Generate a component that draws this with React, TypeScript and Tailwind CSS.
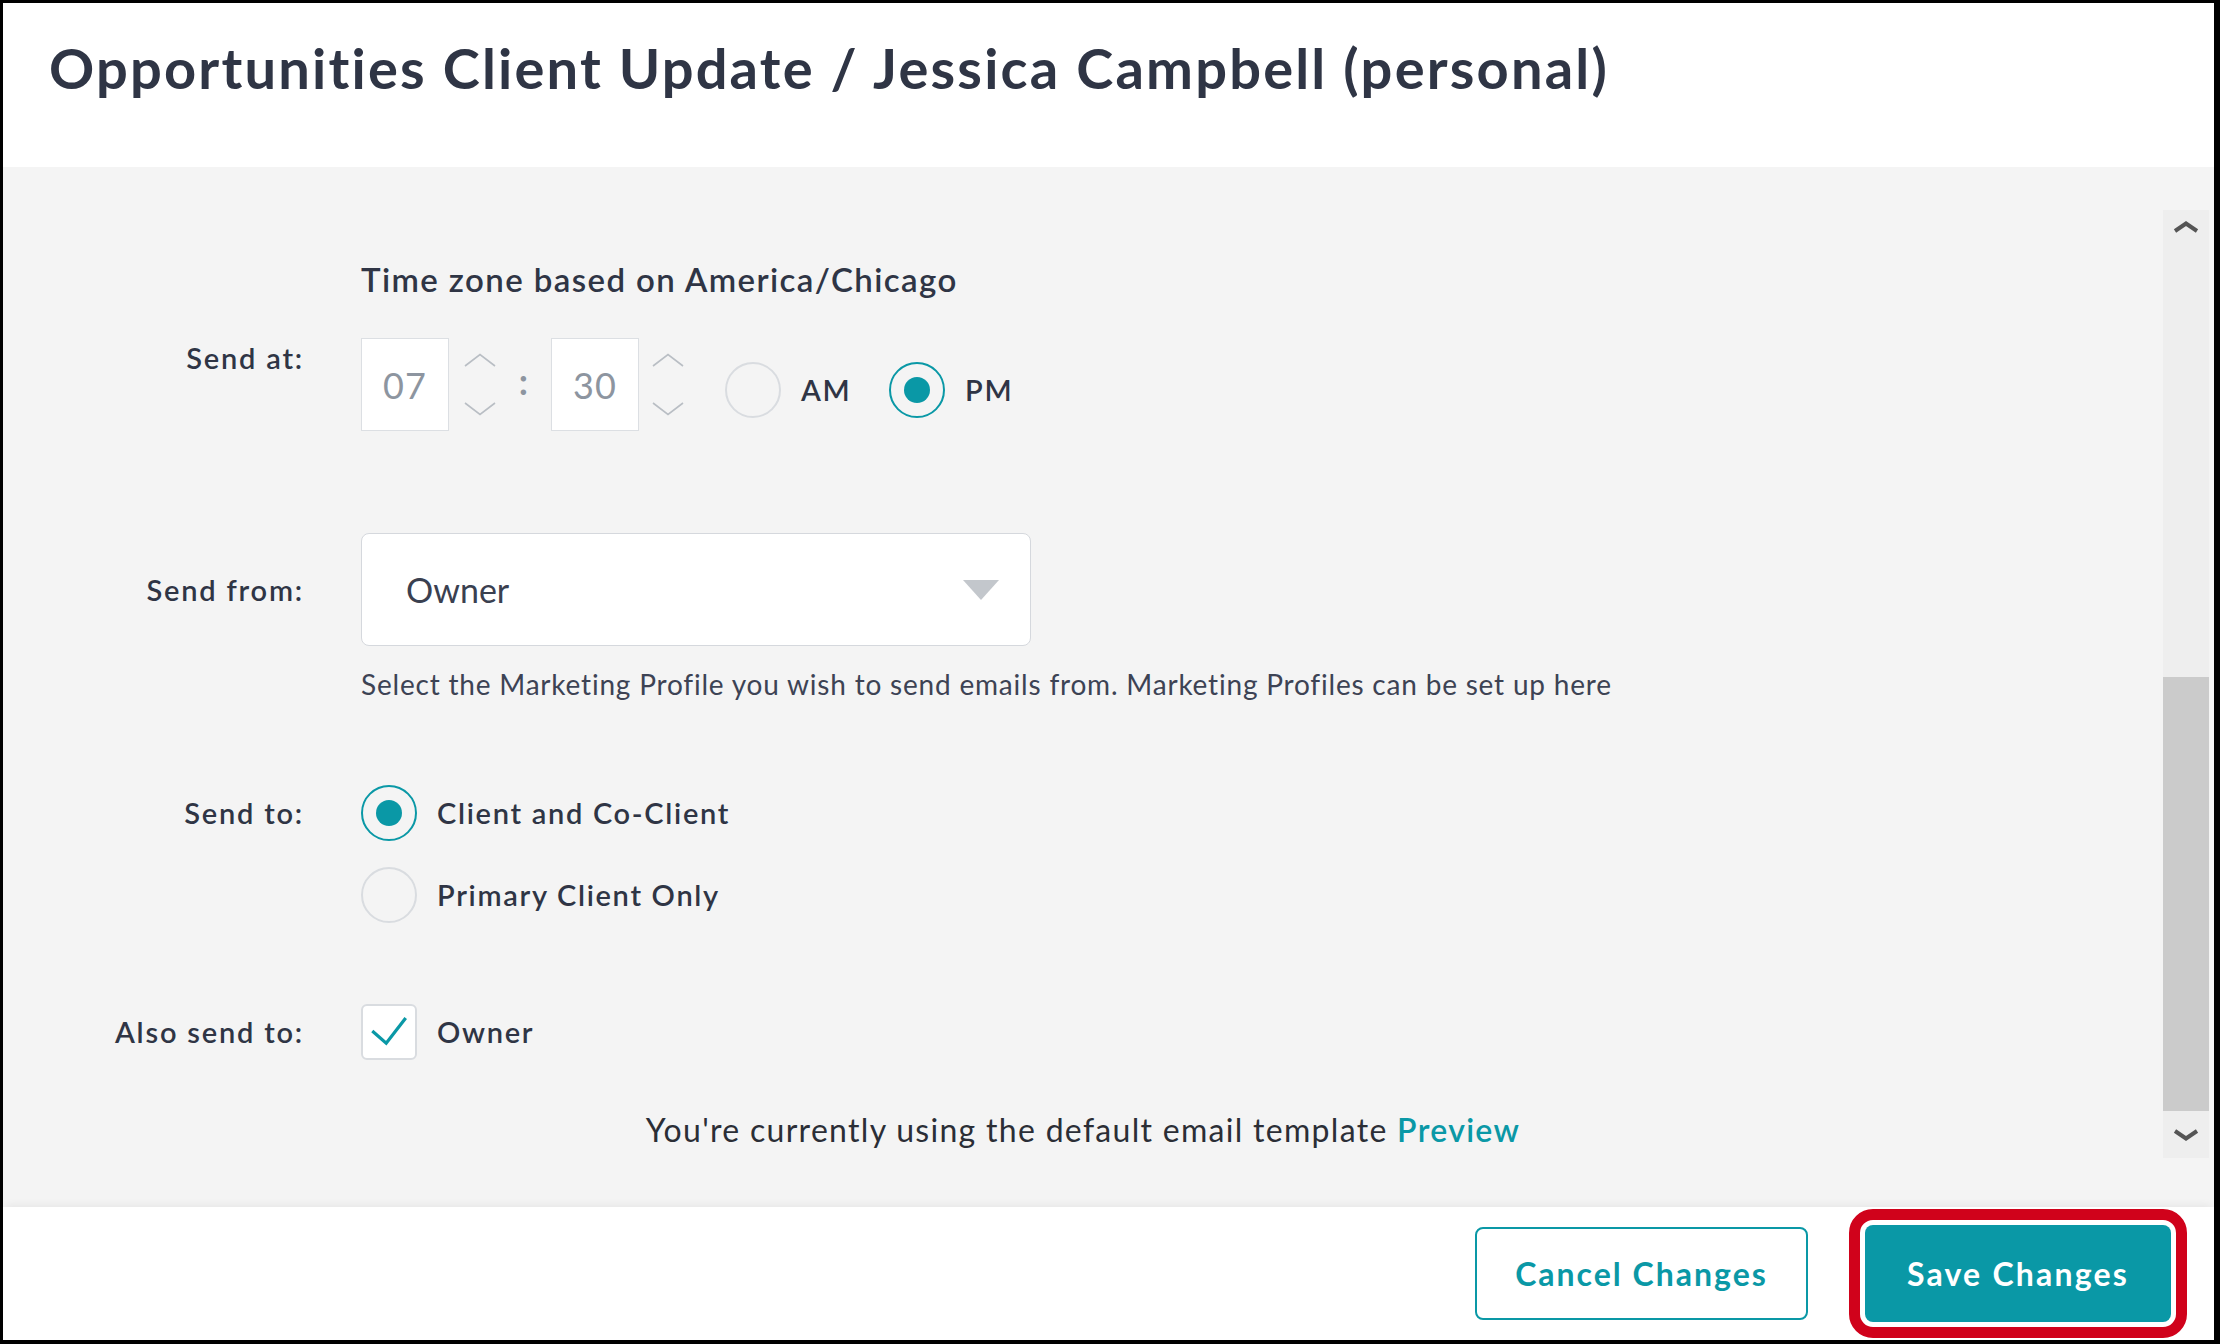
import React from "react";

const TEAL = "#0a98a6";

const Chevron = ({ up }: { up?: boolean }) => (
  <svg width="32" height="14" viewBox="0 0 32 14" fill="none">
    <path
      d={up ? "M1 13 L16 1.5 L31 13" : "M1 1 L16 12.5 L31 1"}
      stroke="#b9bec4"
      strokeWidth="1.6"
    />
  </svg>
);

const Spinner = () => (
  <div className="flex flex-col items-center gap-[35px] w-[32px]">
    <Chevron up />
    <Chevron />
  </div>
);

const TimeBox = ({ value }: { value: string }) => (
  <div className="w-[88px] h-[93px] bg-white border border-[#dcdfe3] flex items-center justify-center text-[36px] tracking-[1px] text-[#8d95a0]">
    {value}
  </div>
);

const Radio = ({ checked }: { checked?: boolean }) => (
  <div
    className={
      checked
        ? "w-[56px] h-[56px] rounded-full border-2 border-[#0a98a6] flex items-center justify-center shrink-0"
        : "w-[56px] h-[56px] rounded-full border-2 border-[#d9dce0] shrink-0"
    }
  >
    {checked && <div className="w-[26px] h-[26px] rounded-full bg-[#0a98a6]" />}
  </div>
);

const Label = ({ children, lh }: { children: React.ReactNode; lh: string }) => (
  <div className={`w-[301px] shrink-0 text-right text-[29px] font-semibold tracking-[1.8px] text-[#2f3545] ${lh}`}>
    {children}
  </div>
);

const OptionText = ({ children }: { children: React.ReactNode }) => (
  <span className="ml-[20px] text-[29px] font-semibold tracking-[1.7px] text-[#2f3545]">{children}</span>
);

export default function App() {
  return (
    <div className="w-[2220px] h-[1344px] border-black border-t-[3px] border-l-[3px] border-r-[6px] border-b-[4px] bg-white flex flex-col font-['Lato',sans-serif]">
      {/* header */}
      <div className="h-[164px] shrink-0 pl-[46px] pt-[33px]">
        <h1 className="text-[56px] leading-[64px] font-bold tracking-[2.2px] text-[#2f3545]">
          Opportunities Client Update / Jessica Campbell (personal)
        </h1>
      </div>

      {/* body */}
      <div className="flex-1 bg-[#f4f4f4] flex">
        <div className="w-[2160px] shrink-0 pt-[92px] flex flex-col">
          {/* time zone */}
          <div className="flex">
            <div className="w-[301px] shrink-0" />
            <div className="ml-[57px] text-[33px] leading-[40px] font-semibold tracking-[1.4px] text-[#2f3545]">
              Time zone based on America/Chicago
            </div>
          </div>

          {/* send at */}
          <div className="flex items-start mt-[39px]">
            <Label lh="leading-[40px]">Send at:</Label>
            <div className="ml-[57px] flex items-center h-[93px]">
              <TimeBox value="07" />
              <div className="ml-[15px]">
                <Spinner />
              </div>
              <div className="w-[55px] text-center text-[36px] font-bold text-[#8d95a0] mb-[8px]">:</div>
              <TimeBox value="30" />
              <div className="ml-[13px]">
                <Spinner />
              </div>
              <div className="ml-[41px] mt-[10px] w-[164px] flex items-center">
                <Radio />
                <OptionText>AM</OptionText>
              </div>
              <div className="mt-[10px] flex items-center">
                <Radio checked />
                <OptionText>PM</OptionText>
              </div>
            </div>
          </div>

          {/* send from */}
          <div className="flex items-center mt-[102px]">
            <Label lh="leading-[40px]">Send from:</Label>
            <div className="ml-[57px] w-[670px] h-[113px] bg-white border border-[#d5d8dd] rounded-[8px] flex items-center justify-between pl-[44px] pr-[31px]">
              <span className="text-[34px] text-[#3a4050]">Owner</span>
              <svg width="36" height="20" viewBox="0 0 36 20">
                <path d="M0 0 H36 L18 20 Z" fill="#c3c7cc" />
              </svg>
            </div>
          </div>
          <div className="flex">
            <div className="w-[301px] shrink-0" />
            <div className="ml-[57px] mt-[20px] text-[28px] leading-[36px] tracking-[0.8px] text-[#3d4354]">
              Select the Marketing Profile you wish to send emails from. Marketing Profiles can be set up here
            </div>
          </div>

          {/* send to */}
          <div className="flex items-start mt-[83px]">
            <Label lh="leading-[56px]">Send to:</Label>
            <div className="ml-[57px] flex flex-col gap-[26px]">
              <div className="flex items-center">
                <Radio checked />
                <OptionText>Client and Co-Client</OptionText>
              </div>
              <div className="flex items-center">
                <Radio />
                <OptionText>Primary Client Only</OptionText>
              </div>
            </div>
          </div>

          {/* also send to */}
          <div className="flex items-start mt-[81px]">
            <Label lh="leading-[56px]">Also send to:</Label>
            <div className="ml-[57px] flex items-center">
              <div className="w-[56px] h-[56px] bg-white border-2 border-[#d9dce0] rounded-[6px] flex items-center justify-center">
                <svg width="56" height="56" viewBox="0 0 56 56" fill="none">
                  <path d="M10 27 L25 40 L46 13" stroke={TEAL} strokeWidth="3.5" />
                </svg>
              </div>
              <OptionText>Owner</OptionText>
            </div>
          </div>

          {/* template */}
          <div className="mt-[50px] text-center text-[32px] leading-[40px] tracking-[1.3px] text-[#2b2e36]">
            You're currently using the default email template{" "}
            <span className="font-semibold text-[#0a98a6]">Preview</span>
          </div>
        </div>

        {/* scrollbar */}
        <div className="w-[46px] pt-[43px] pb-[49px] flex flex-col">
          <div className="flex-1 bg-[#eeeeee] flex flex-col">
            <div className="h-[34px] flex items-center justify-center">
              <svg width="26" height="12" viewBox="0 0 26 12" fill="none">
                <path d="M2 10 L13 2.5 L24 10" stroke="#555" strokeWidth="4" />
              </svg>
            </div>
            <div className="flex-1" />
            <div className="h-[434px] bg-[#cbcbcb]" />
            <div className="h-[47px] flex items-center justify-center">
              <svg width="26" height="12" viewBox="0 0 26 12" fill="none">
                <path d="M2 2 L13 9.5 L24 2" stroke="#555" strokeWidth="4" />
              </svg>
            </div>
          </div>
        </div>
      </div>

      {/* footer */}
      <div className="h-[133px] shrink-0 bg-white flex items-center justify-end pr-[27px] shadow-[0_-5px_8px_-3px_rgba(0,0,0,0.06)] relative">
        <button className="mr-[41px] w-[333px] h-[93px] border-2 border-[#0a98a6] rounded-[8px] text-[32px] font-bold tracking-[2px] text-[#0a98a6] bg-white">
          Cancel Changes
        </button>
        <div className="border-[11px] border-[#d0021b] rounded-[24px] p-[5px] bg-white">
          <button className="w-[306px] h-[97px] bg-[#0a98a6] rounded-[8px] text-[32px] font-bold tracking-[2.2px] text-white">
            Save Changes
          </button>
        </div>
      </div>
    </div>
  );
}
